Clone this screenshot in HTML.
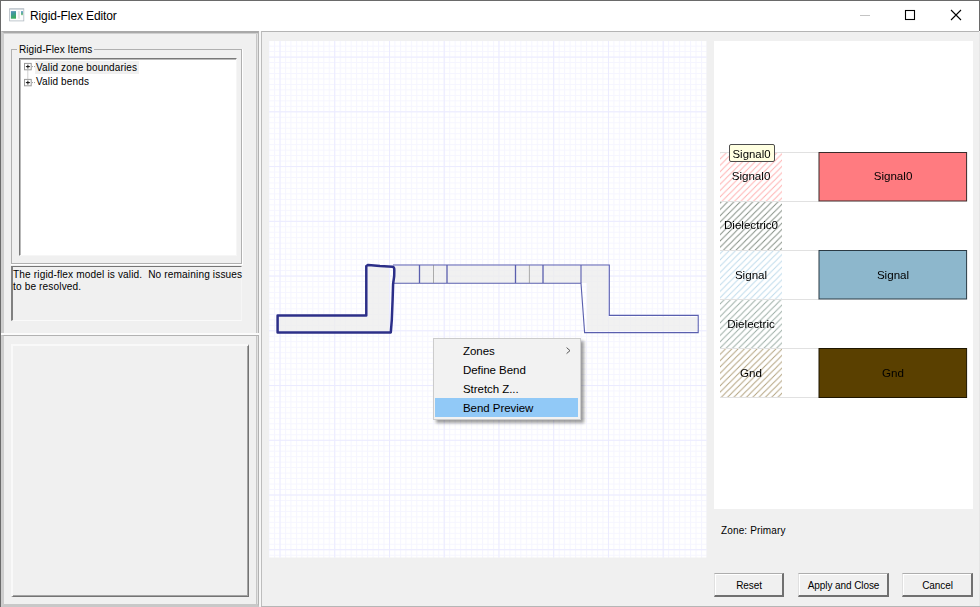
<!DOCTYPE html>
<html><head><meta charset="utf-8"><title>Rigid-Flex Editor</title>
<style>
html,body{margin:0;padding:0;}
body{width:980px;height:607px;overflow:hidden;background:#f0f0f0;position:relative;font-family:"Liberation Sans",sans-serif;color:#000;}
.abs{position:absolute;box-sizing:border-box;}
#win{left:0;top:0;width:980px;height:607px;border-left:1px solid #6a6a6a;border-top:1px solid #6a6a6a;z-index:50;pointer-events:none;}
#winr{left:979px;top:0;width:1px;height:31px;background:#6a6a6a;z-index:50;}
#winr2{left:979px;top:32px;width:1px;height:575px;background:#e6e6e6;z-index:50;}
#winb{left:261px;top:606px;width:719px;height:1px;background:#b6b6b6;z-index:50;}
#title{left:1px;top:1px;width:978px;height:30px;background:#fff;}
#ttext{left:30px;top:9px;font-size:12px;line-height:15px;white-space:nowrap;letter-spacing:-0.12px;}
/* panels */
#lp1{left:1px;top:31px;width:258px;height:303px;border:2px solid #cbcbcb;border-left:3px solid #cdcdcd;border-top-color:#a9a9a9;border-bottom:1px solid #b8b8b8;border-right:1px solid #b2b2b2;box-shadow:inset -1px 0 0 #e2e2e2, inset -2px 0 0 #c6c6c6;}
#lp1:before{content:"";position:absolute;left:0;right:0;top:0;height:1px;background:#cfcfcf;}
#lpgap{left:1px;top:333px;width:258px;height:2px;background:#fbfbfb;}
#lp2{left:1px;top:335px;width:258px;height:272px;border:2px solid #cbcbcb;border-left:3px solid #cdcdcd;border-top:1px solid #b2b2b2;border-right:1px solid #b2b2b2;box-shadow:inset -1px 0 0 #e2e2e2, inset -2px 0 0 #c6c6c6;border-bottom:3px solid #c8c8c8;}
#split{left:259px;top:31px;width:2px;height:575px;background:#f7f7f7;}
#cp{left:261px;top:31px;width:718px;height:575px;border-left:1px solid #bdbdbd;border-top:1px solid #b4b4b4;}
.t11{font-size:10px;letter-spacing:0.14px;line-height:13px;white-space:nowrap;}
#grp{left:11px;top:49px;width:232px;height:216px;border:1px solid #fff;}
#grp:before{content:"";position:absolute;left:-1px;top:-1px;right:0;bottom:0;border:1px solid #b0b0b0;}
#grplab{left:17px;top:43px;letter-spacing:0.07px;background:#f0f0f0;padding:0 2px;}
#tree{left:19px;top:58px;width:218px;height:198px;background:#fff;border:1px solid #f6f6f6;border-left:1px solid #787878;border-top:1px solid #787878;box-shadow:inset 1px 1px 0 #b9b9b9;}
#status{left:11px;top:266px;width:231px;height:55px;border-left:2px solid #808080;border-top:1px solid #757575;border-bottom:1px solid #fafafa;border-right:1px solid #f6f6f6;}
#inner2{left:11px;top:344px;width:238px;height:253px;border:2px solid #f9f9f9;border-right:1px solid #747474;border-bottom:1px solid #747474;box-shadow:inset -1px -1px 0 #a4a4a4;}
#white{left:714px;top:41px;width:259px;height:468px;background:#fff;}
.btn{height:24px;top:573px;border:1px solid #adadad;border-right:2px solid #707070;border-bottom:2px solid #707070;border-left-color:#e0e0e0;background:#f0f0f0;font-size:10px;letter-spacing:-0.08px;line-height:23px;text-align:center;padding-left:1px;}
.btn:before{content:"";position:absolute;left:0;top:0;right:0;bottom:0;border-left:1px solid #fff;border-top:1px solid #fff;}
/* menu */
#menu{left:433px;top:338px;width:148px;height:82px;background:#f2f2f2;border:1px solid #ccc;box-shadow:3px 3px 3px rgba(0,0,0,.38);z-index:20;font-size:11.5px;letter-spacing:-0.05px;}
#menu .mi{position:absolute;left:2px;width:144px;height:19px;line-height:19px;padding-left:27px;box-sizing:border-box;white-space:nowrap;}
#menu .sel{background:#91c9f7;}
.lab{font-size:11.6px;line-height:14px;will-change:transform;white-space:nowrap;text-align:center;z-index:5;}
</style></head><body>
<div class="abs" id="title"></div>
<svg class="abs" style="left:9px;top:8px" width="16" height="14" viewBox="0 0 16 14">
 <defs><linearGradient id="ig" x1="0" y1="0" x2="0.3" y2="1"><stop offset="0" stop-color="#5c8fc0"/><stop offset="0.45" stop-color="#3f9a96"/><stop offset="1" stop-color="#3cab5c"/></linearGradient>
 <linearGradient id="ig2" x1="0" y1="0" x2="0" y2="1"><stop offset="0" stop-color="#6c9fd0"/><stop offset="0.7" stop-color="#5fb58a"/><stop offset="1" stop-color="#9fd69a"/></linearGradient></defs>
 <rect x="0.6" y="0.8" width="14.2" height="12.1" fill="#fdfdfd" stroke="#b6bec6" stroke-width="0.85"/>
 <rect x="0.4" y="0.5" width="14.6" height="1" fill="#bcc4cc"/>
 <rect x="1.9" y="3.1" width="5.1" height="7.6" fill="url(#ig)"/>
 <rect x="8.9" y="3.1" width="2" height="7.6" fill="#e5e5e5"/>
 <rect x="12" y="3.1" width="2" height="4.1" fill="url(#ig2)"/>
</svg>
<div class="abs" id="ttext">Rigid-Flex Editor</div>
<svg class="abs" style="left:850px;top:1px" width="128" height="30" viewBox="850 1 128 30">
 <path d="M860 15.5h10" stroke="#c4c4c4" stroke-width="1"/>
 <rect x="905.5" y="10.5" width="9" height="9" fill="none" stroke="#000" stroke-width="1.1"/>
 <path d="M951 10l10 10M961 10l-10 10" stroke="#000" stroke-width="1.1" fill="none"/>
</svg>

<div class="abs" id="lp1"></div>
<div class="abs" id="lpgap"></div>
<div class="abs" id="lp2"></div>
<div class="abs" id="split"></div>
<div class="abs" id="cp"></div>

<div class="abs" id="grp"></div>
<div class="abs t11" id="grplab">Rigid-Flex Items</div>
<div class="abs" id="tree"></div>
<div class="abs" style="left:35px;top:61px;width:104px;height:13px;background:#f0f0f0"></div>
<svg class="abs" style="left:20px;top:60px" width="20" height="30" viewBox="20 60 20 30">
 <path d="M27.8 70.5v8.5M32 66.6h3M32 82.6h3" stroke="#a0a0a0" stroke-dasharray="1 1" fill="none"/>
 <rect x="24.5" y="63.4" width="6.7" height="6.4" fill="#fff" stroke="#999" stroke-width="1"/>
 <path d="M25.9 66.6h4M27.9 64.7v3.8" stroke="#111" stroke-width="1"/>
 <rect x="24.5" y="79.4" width="6.7" height="6.4" fill="#fff" stroke="#999" stroke-width="1"/>
 <path d="M25.9 82.6h4M27.9 80.7v3.8" stroke="#111" stroke-width="1"/>
</svg>
<div class="abs t11" style="left:36px;top:61px">Valid zone boundaries</div>
<div class="abs t11" style="left:36px;top:75px">Valid bends</div>
<div class="abs" id="status"></div>
<div class="abs t11" style="left:13px;top:268.5px;line-height:12.5px;font-size:10.1px">The rigid-flex model is valid.&nbsp; No remaining issues<br>to be resolved.</div>
<div class="abs" id="inner2"></div>

<div class="abs" id="white"></div>
<!-- canvas svg -->
<svg class="abs" id="cv" style="left:0;top:0" width="980" height="607" viewBox="0 0 980 607">
 <defs>
  <pattern id="gmin" x="279.5" y="56.6" width="5.474" height="5.474" patternUnits="userSpaceOnUse">
   <rect width="5.474" height="5.474" fill="#fff"/>
   <path d="M0.5 0V5.474M0 0.5H5.474" stroke="#f5f5ff" stroke-width="1"/>
  </pattern>
  <pattern id="gmaj" x="279.5" y="56.6" width="54.74" height="54.74" patternUnits="userSpaceOnUse">
   <path d="M0.5 0V54.74M0 0.5H54.74" stroke="#ebebff" stroke-width="1" fill="none"/>
  </pattern>
  <pattern id="h1" width="6.3" height="6.3" patternUnits="userSpaceOnUse" patternTransform="translate(720 152.8)"><path d="M-1 7.3L7.3 -1M-1 1L1 -1M5.3 7.3L7.3 5.3" stroke="#ffadad" stroke-width="0.95"/></pattern>
  <pattern id="h2" width="6.3" height="6.3" patternUnits="userSpaceOnUse" patternTransform="translate(720 152.8)"><path d="M-1 7.3L7.3 -1M-1 1L1 -1M5.3 7.3L7.3 5.3" stroke="#7f8a80" stroke-width="0.95"/></pattern>
  <pattern id="h3" width="6.3" height="6.3" patternUnits="userSpaceOnUse" patternTransform="translate(720 152.8)"><path d="M-1 7.3L7.3 -1M-1 1L1 -1M5.3 7.3L7.3 5.3" stroke="#bcd9ea" stroke-width="0.95"/></pattern>
  <pattern id="h4" width="6.3" height="6.3" patternUnits="userSpaceOnUse" patternTransform="translate(720 152.8)"><path d="M-1 7.3L7.3 -1M-1 1L1 -1M5.3 7.3L7.3 5.3" stroke="#98aaa2" stroke-width="0.95"/></pattern>
  <pattern id="h5" width="6.3" height="6.3" patternUnits="userSpaceOnUse" patternTransform="translate(720 152.8)"><path d="M-1 7.3L7.3 -1M-1 1L1 -1M5.3 7.3L7.3 5.3" stroke="#b09f7a" stroke-width="0.95"/></pattern>
 </defs>
 <rect x="269" y="41" width="437.5" height="516.5" fill="url(#gmin)"/>
 <rect x="269" y="41" width="437.5" height="516.5" fill="url(#gmaj)"/>
 <!-- fills -->
 <g fill="#ededed" fill-opacity="0.78">
  <path d="M279 317H368V267H389V331.5H279Z"/>
  <path d="M394 266H581V283H394Z"/>
  <path d="M581 266H608V317H697V331H587V283H581Z"/>
 </g>
 <!-- thin outlines -->
 <g fill="none" stroke="#5a5fae" stroke-width="1.1">
  <path d="M393 265H609.3V315.4H698.2V332.6H584.6L581 283.2H393"/>
  <path d="M581 265V283"/>
 </g>
 <g stroke="#5a5fae" stroke-width="1.3"><path d="M419.5 265V283M447 265V283M515.5 265V283M543 265V283"/></g>
 <g stroke="#858585" stroke-width="0.65"><path d="M433.5 265V283M529.4 265V283"/></g>
 <!-- bold outline -->
 <path d="M277.6 315.6H366.3V266L368.2 264.9L380 266L392.6 266.7Q394.4 267 394.3 270L394.2 276L393.1 284L392.6 300L391.8 320L390.8 332.4H277.6Z" fill="none" stroke="#2c2f88" stroke-width="2.5" stroke-linejoin="round"/>
 <!-- stackup -->
 <g stroke="#e1e1e1" stroke-width="1"><path d="M720 152.5H819M720 201.5H819M720 250.5H819M720 299.5H819M720 348.5H819M720 397.5H819"/></g>
 <rect x="720" y="153" width="62" height="48" fill="url(#h1)"/>
 <rect x="720" y="202" width="62" height="48" fill="url(#h2)"/>
 <rect x="720" y="251" width="62" height="48" fill="url(#h3)"/>
 <rect x="720" y="300" width="62" height="48" fill="url(#h4)"/>
 <rect x="720" y="349" width="62" height="48" fill="url(#h5)"/>
 <rect x="819" y="152.5" width="147.6" height="48.5" fill="#ff7b80" stroke="#3a2a2a" stroke-width="1"/>
 <rect x="819" y="250.5" width="147.6" height="48.5" fill="#8db7cc" stroke="#2a3a44" stroke-width="1"/>
 <rect x="819" y="348.5" width="147.6" height="49" fill="#5a4000" stroke="#1e1600" stroke-width="1"/>
</svg>
<div class="abs lab" style="left:720px;width:62px;top:169.3px">Signal0</div>
<div class="abs lab" style="left:716px;width:70px;top:218.3px">Dielectric0</div>
<div class="abs lab" style="left:720px;width:62px;top:267.5px">Signal</div>
<div class="abs lab" style="left:720px;width:62px;top:316.5px">Dielectric</div>
<div class="abs lab" style="left:720px;width:62px;top:365.5px">Gnd</div>
<div class="abs lab" style="left:819px;width:148px;top:169.3px">Signal0</div>
<div class="abs lab" style="left:819px;width:148px;top:267.5px">Signal</div>
<div class="abs lab" style="left:819px;width:148px;top:365.5px">Gnd</div>
<div class="abs lab" style="left:729px;top:144px;width:46px;height:18px;background:#ffffe1;border:1px solid #4d4d4d;border-radius:2px;line-height:18px;padding-right:1px;font-size:11.4px;z-index:6">Signal0</div>

<div class="abs t11" style="left:721px;top:523.5px">Zone: Primary</div>
<div class="abs btn" style="left:714px;width:70px">Reset</div>
<div class="abs btn" style="left:798px;width:91px">Apply and Close</div>
<div class="abs btn" style="left:902px;width:71px">Cancel</div>

<div class="abs" id="menu">
 <div class="mi" style="top:2.6px">Zones</div>
 <div class="mi" style="top:21.8px">Define Bend</div>
 <div class="mi" style="top:41px">Stretch Z...</div>
 <div class="mi sel" style="top:59px;left:1px;width:143px;padding-left:28px;line-height:21.5px">Bend Preview</div>
 <svg class="abs" style="left:131px;top:7px" width="8" height="10" viewBox="0 0 8 10"><path d="M1.6 1.6L5 4.6L1.6 7.6" fill="none" stroke="#555" stroke-width="1"/></svg>
</div>
<div class="abs" id="win"></div><div class="abs" id="winr"></div><div class="abs" id="winr2"></div><div class="abs" id="winb"></div>
</body></html>
